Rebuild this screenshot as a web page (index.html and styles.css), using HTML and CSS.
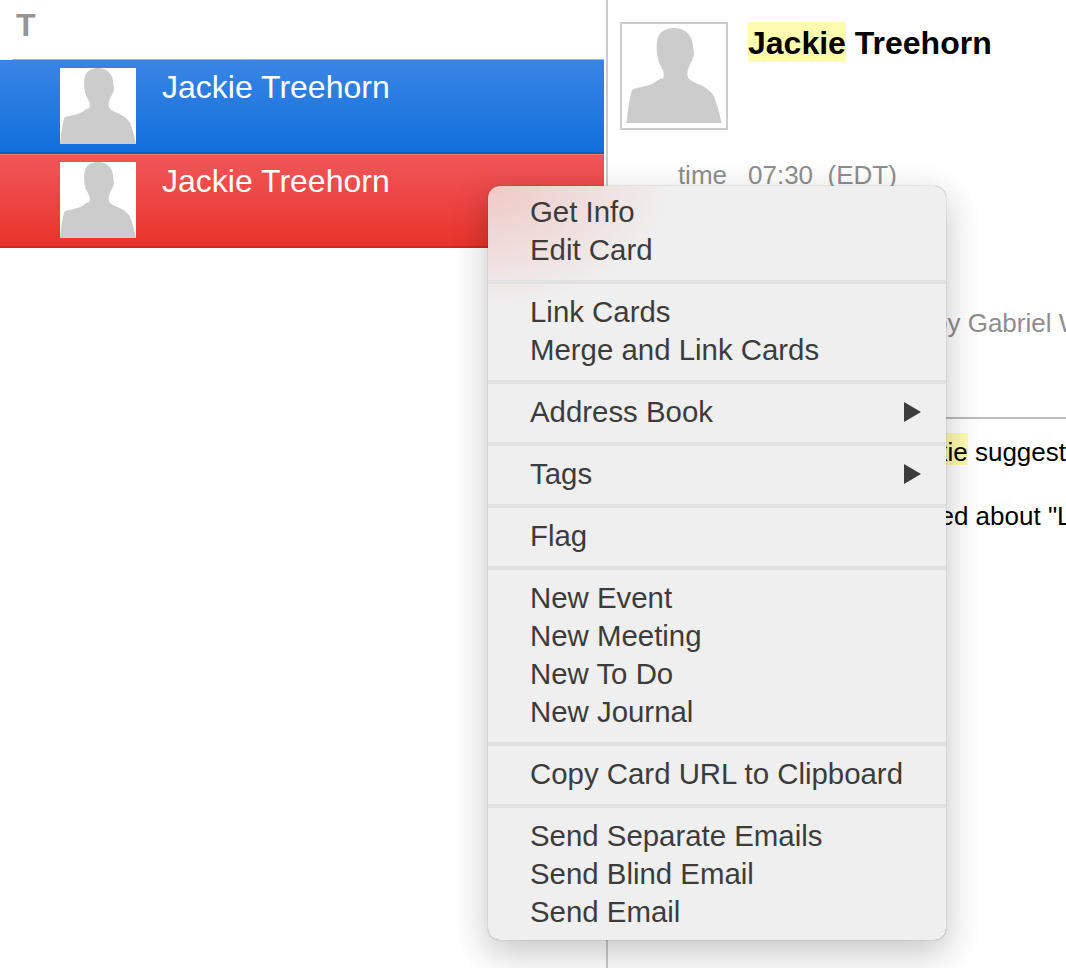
FILE: index.html
```html
<!DOCTYPE html>
<html lang="en">
<head>
<meta charset="utf-8">
<title>Contacts</title>
<link rel="stylesheet" href="styles.css">
</head>
<body>
<svg class="defs" width="0" height="0" aria-hidden="true"><defs><symbol id="person" viewBox="0 0 100 100"><path d="M50 0C60 0 68 6 69.600 16C70 19 70.500 23 71 26.600C71 31 69 34 67.500 37C65.500 41 64 45 64 49C64.500 52 65 53 66.800 54.500C70 57 74 58.500 77.300 59.800C82 62 87 65 91 70C95 78 98 90 100 100L0 100C1 90 2.500 78 4.500 70C5 67 6 65 7.300 64.300C14 62.500 19 61.500 24.800 59.800C28 58.500 31 56.500 33.600 54.500C36 53 38 53 38.800 52.800C39.200 50 39.200 48 38.800 45.800C37.500 42 36 40 34.600 37C33 33 32 28 31.800 23C31.500 18 32 13 33.500 9C36 3 43 0 50 0Z"/></symbol></defs></svg>
<div class="app">
  <section class="list">
    <h2 class="letter">T</h2>
    <div class="row row-blue">
      <svg class="thumb"><use href="#person"/></svg>
      <span class="row-name">Jackie Treehorn</span>
    </div>
    <div class="row row-red">
      <svg class="thumb"><use href="#person"/></svg>
      <span class="row-name">Jackie Treehorn</span>
    </div>
  </section>
  <section class="detail">
    <div class="card-head">
      <div class="photo"><svg class="photo-img"><use href="#person"/></svg></div>
      <h1 class="card-name"><mark class="hit">Jackie</mark> Treehorn</h1>
    </div>
    <div class="field"><span class="field-label">time</span><span class="field-value">07:30&nbsp; (EDT)</span></div>
    <div class="credit">by Gabriel W</div>
    <hr class="rule">
    <p class="note note-first"><mark class="hit">Jackie</mark> suggested</p>
    <p class="note note-second">asked about "L</p>
  </section>
</div>
<nav class="menu">
  <div class="item">Get Info</div>
  <div class="item">Edit Card</div>
  <div class="sep"></div>
  <div class="item">Link Cards</div>
  <div class="item">Merge and Link Cards</div>
  <div class="sep"></div>
  <div class="item item-sub">Address Book<span class="arrow"></span></div>
  <div class="sep"></div>
  <div class="item item-sub">Tags<span class="arrow"></span></div>
  <div class="sep"></div>
  <div class="item">Flag</div>
  <div class="sep"></div>
  <div class="item">New Event</div>
  <div class="item">New Meeting</div>
  <div class="item">New To Do</div>
  <div class="item">New Journal</div>
  <div class="sep"></div>
  <div class="item">Copy Card URL to Clipboard</div>
  <div class="sep"></div>
  <div class="item">Send Separate Emails</div>
  <div class="item">Send Blind Email</div>
  <div class="item">Send Email</div>
</nav>
</body>
</html>
```
FILE: styles.css
```css
html, body { margin: 0; height: 100%; overflow: hidden; background: #fff; }
body { font-family: "Liberation Sans", Arial, sans-serif; position: relative; }
.defs { position: absolute; }
.app { display: flex; height: 968px; }

.list { width: 606px; flex: none; }
.letter { margin: 0; height: 60px; padding: 7px 0 0 16px; box-sizing: border-box; font-size: 32px; line-height: 36px; font-weight: bold; color: #959595;
  background: linear-gradient(#9db8d6, #9db8d6) 12px 100% / 592px 1px no-repeat; }
.row { height: 94px; box-sizing: border-box; width: 604px; display: flex; align-items: flex-start; padding: 8px 0 0 60px; }
.row-blue { background: linear-gradient(#3a85e4, #116fdc); border-bottom: 2px solid #0f60bd; }
.row-red { padding-top: 7px; border-top: 1px solid #f67a77; background: linear-gradient(#f0575a, #e8332a); border-bottom: 2px solid #c92a23; }
.thumb { width: 76px; height: 76px; background: #fff; fill: #ccc; flex: none; }
.row-name { margin: 1px 0 0 26px; font-size: 32px; line-height: 36px; color: #fff; }

.detail { flex: 1; border-left: 2px solid #ccc; min-width: 0; overflow: hidden; white-space: nowrap; }
.card-head { display: flex; padding: 22px 0 0 12px; }
.photo { width: 108px; height: 108px; box-sizing: border-box; border: 2px solid #ccc; padding: 4px 4px 5px; flex: none; }
.photo-img { display: block; width: 96px; height: 95px; fill: #ccc; }
.card-name { margin: 0 0 0 20px; height: 40px; font-size: 32px; line-height: 42px; font-weight: bold; color: #000; }
.hit { display: inline-block; height: 40px; background: #fffbb0; color: inherit; }
.field { display: flex; margin-top: 26px; font-size: 26px; line-height: 38px; color: #8e8e8e; }
.field-label { width: 119px; text-align: right; flex: none; }
.field-value { margin-left: 21px; }
.credit { margin: 110px 0 0 325px; font-size: 26px; line-height: 38px; color: #8e8e8e; }
.rule { margin: 75px 0 0; border: 0; height: 2px; background: #bbb; }
.note { margin: 0; height: 32px; font-size: 26px; line-height: 38px; color: #000; }
.note .hit { height: 32px; }
.note-first { margin: 14px 0 0 286px; }
.note-second { margin: 32px 0 0 291px; }

.menu { position: absolute; left: 488px; top: 186px; width: 458px; height: 754px; box-sizing: border-box; padding: 7px 0 9px; border-radius: 12px;
  background: radial-gradient(ellipse 180px 120px at 0 0, #efc9c6, rgba(239,239,239,0)), #efefef;
  box-shadow: 0 0 1px 0 rgba(0,0,0,.55), 0 12px 34px 2px rgba(0,0,0,.22);
  font-size: 29.4px; color: #3c3c3c; }
.item { height: 38px; line-height: 38px; padding-left: 42px; position: relative; white-space: nowrap; }
.sep { height: 4px; margin: 11px 0 9px; background: #e1e1e1; }
.arrow { position: absolute; left: 416px; top: 9px; width: 0; height: 0; border-style: solid; border-width: 10px 0 10px 17px; border-color: transparent transparent transparent #3c3c3c; }
```
